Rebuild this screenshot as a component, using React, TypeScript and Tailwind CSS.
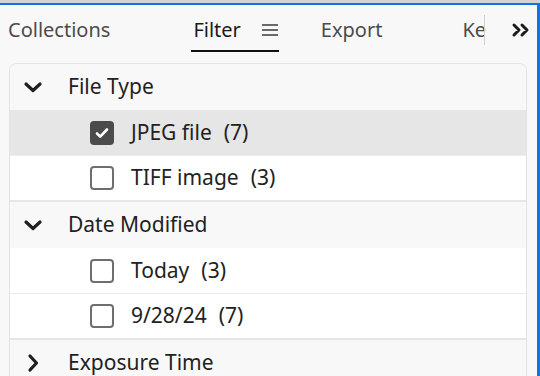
import { useState } from 'react';

type Item = { label: string; count: number; checked?: boolean };
type Section = { title: string; open: boolean; items: Item[] };

const sections: Section[] = [
    {
        title: 'File Type',
        open: true,
        items: [
            { label: 'JPEG file', count: 7, checked: true },
            { label: 'TIFF image', count: 3 },
        ],
    },
    {
        title: 'Date Modified',
        open: true,
        items: [
            { label: 'Today', count: 3 },
            { label: '9/28/24', count: 7 },
        ],
    },
    { title: 'Exposure Time', open: false, items: [] },
];

function Chevron({ open }: { open: boolean }) {
    return (
        <svg width="20" height="20" viewBox="0 0 20 20" fill="none" stroke="#1f1f1f" strokeWidth="3.2" strokeLinecap="round" strokeLinejoin="round">
            {open ? <path d="M3 7l7 6.5 7-6.5" /> : <path d="M7 3l6.5 7-6.5 7" />}
        </svg>
    );
}

function Checkbox({ checked }: { checked?: boolean }) {
    if (checked) {
        return (
            <div className="w-6 h-6 rounded-[4px] bg-[#4b4b4b] flex items-center justify-center">
                <svg width="16" height="16" viewBox="0 0 16 16" fill="none" stroke="white" strokeWidth="2.6" strokeLinecap="round" strokeLinejoin="round">
                    <path d="M3 8.5l3.2 3.2L13 4.5" />
                </svg>
            </div>
        );
    }
    return <div className="w-6 h-6 rounded-[4px] border-[2.5px] border-[#6e6e6e] bg-white" />;
}

export default function App() {
    const [active] = useState('Filter');

    return (
        <div className="w-[540px] h-[376px] overflow-hidden bg-[#d4d4d4] pt-[3px] font-['Noto_Sans',sans-serif] text-[#222]">
            <div className="h-full bg-[#f8f8f8] border-t-2 border-r-[3px] border-[#1473e6] flex flex-col">
                <div className="h-[56px] pb-[6px] flex items-center text-[20px] text-[#4b4b4b] shrink-0">
                    <span className="ml-2">Collections</span>
                    <div className="ml-[81px] h-full flex items-center gap-5 relative pl-[2px]">
                        <span className={active === 'Filter' ? 'text-[#1a1a1a]' : ''}>Filter</span>
                        <svg width="18" height="14" viewBox="0 0 18 14" stroke="#3a3a3a" strokeWidth="1.6">
                            <path d="M1 2h16M1 7h16M1 12h16" />
                        </svg>
                        <div className="absolute left-0 right-0 bottom-[3px] h-[2px] bg-[#111]" />
                    </div>
                    <span className="ml-[42px]">Export</span>
                    <span className="ml-[80px] w-[22px] whitespace-nowrap">Ke</span>
                    <div className="w-px h-[30px] bg-[#d0d0d0]" />
                    <svg className="ml-[26px]" width="20" height="16" viewBox="0 0 20 16" fill="none" stroke="#1a1a1a" strokeWidth="3" strokeLinecap="round" strokeLinejoin="round">
                        <path d="M3 3l5 5-5 5M11 3l5 5-5 5" />
                    </svg>
                </div>
                <div className="ml-[9px] mr-[10px] mt-[2px] flex-1 border border-b-0 border-[#e3e3e3] rounded-t-[8px] overflow-hidden bg-white">
                    {sections.map((s, si) => (
                        <div key={s.title} className={si > 0 ? 'border-t-2 border-[#e6e6e6]' : ''}>
                            <div className="h-[46px] flex items-center bg-[#f8f8f8] text-[21px] text-[#222]">
                                <div className="w-[46px] flex justify-center">
                                    <Chevron open={s.open} />
                                </div>
                                <span className="ml-[12px]">{s.title}</span>
                            </div>
                            {s.items.map((item, ii) => (
                                <div
                                    key={item.label}
                                    className={`h-[45px] flex items-center text-[21px] text-[#222] ${ii > 0 ? 'border-t border-[#ececec]' : ''} ${item.checked ? 'bg-[#e6e6e6]' : 'bg-white'}`}
                                >
                                    <div className="ml-[80px]">
                                        <Checkbox checked={item.checked} />
                                    </div>
                                    <span className="ml-[17px]">{item.label}</span>
                                    <span className="ml-[12px]">({item.count})</span>
                                </div>
                            ))}
                        </div>
                    ))}
                </div>
            </div>
        </div>
    );
}
